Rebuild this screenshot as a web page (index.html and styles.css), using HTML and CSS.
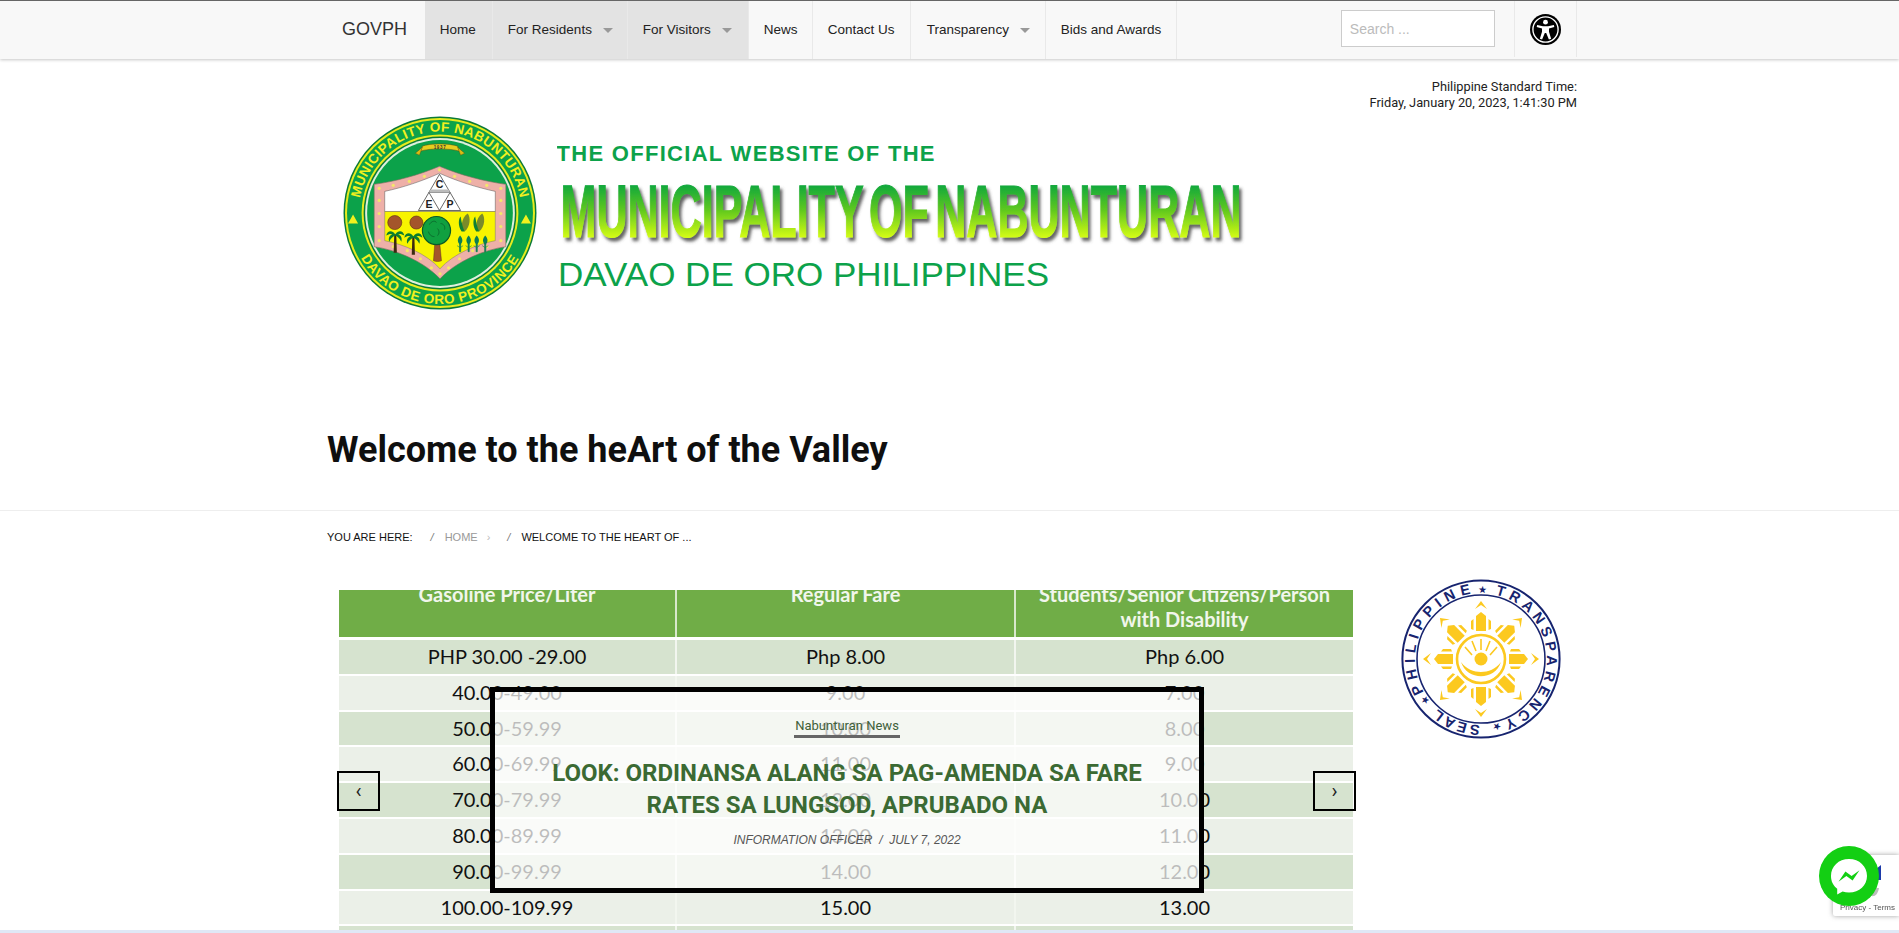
FILE: index.html
```html
<!DOCTYPE html>
<html lang="en">
<head>
    <meta charset="UTF-8">
    <meta name="viewport" content="width=device-width, initial-scale=1.0">
    <title>Welcome to the heArt of the Valley</title>
    <link rel="stylesheet" href="styles.css">
</head>
<body>
    <nav class="topbar">
        <div class="wrap topbar-inner">
            <a class="brand">GOVPH</a>
            <ul class="menu">
                <li class="menu-item active item-home">Home</li>
                <li class="menu-item active item-res">For Residents <span class="caret"></span></li>
                <li class="menu-item active item-vis">For Visitors <span class="caret"></span></li>
                <li class="menu-item item-news">News</li>
                <li class="menu-item item-contact">Contact Us</li>
                <li class="menu-item item-trans">Transparency <span class="caret"></span></li>
                <li class="menu-item item-bids">Bids and Awards</li>
            </ul>
            <input class="search" type="text" placeholder="Search ...">
            <div class="a11y">
                <svg width="31" height="31" viewBox="0 0 32 32">
                    <circle cx="16" cy="16" r="16" fill="#000"/>
                    <circle cx="16" cy="16" r="13" fill="none" stroke="#fff" stroke-width="1.4"/>
                    <circle cx="16" cy="8.4" r="2.5" fill="#fff"/>
                    <path d="M7.4 11.4 L13.4 12.6 H18.6 L24.6 11.4 L25.1 13.4 L19.6 15 V18.4 L21.8 25.6 L19.5 26.3 L16.7 19.6 H15.3 L12.5 26.3 L10.2 25.6 L12.4 18.4 V15 L6.9 13.4 Z" fill="#fff"/>
                </svg>
            </div>
        </div>
    </nav>

    <div class="wrap">
        <div class="pst">
            Philippine Standard Time:<br>
            Friday, January 20, 2023, 1:41:30 PM
        </div>

        <header class="masthead">
            <svg class="town-seal" width="194" height="194" viewBox="0 0 193 193">
                <defs>
                    <path id="sealTop" d="M15.5 96.5 A81 81 0 1 1 177.5 96.5"/>
                    <path id="sealBottom" d="M6 96.5 A90.5 90.5 0 0 0 187 96.5"/>
                    <g id="palm">
                        <path d="M-1 0 L-1.6 18 H1.6 L1 0 Z" fill="#3a2a10"/>
                        <path d="M0 0 C-3 -5 -8 -4 -9 1 C-6 -1 -4 -1 -3 0 C-6 1 -7 4 -6 7 C-4 3 -2 2 0 1 C2 2 4 3 6 7 C7 4 6 1 3 0 C4 -1 6 -1 9 1 C8 -4 3 -5 0 0 Z" fill="#0a7d2f"/>
                    </g>
                    <g id="corn">
                        <path d="M3 -9 C6 -6 6 4 0 9 C-4 6 -4 -4 3 -9 Z" fill="#7a8a2a"/>
                        <path d="M-3 9 C-7 3 -6 -4 -4 -6 C-3 0 -2 5 0 9 Z" fill="#0f7f35"/>
                    </g>
                    <g id="sprout">
                        <path d="M0 -6 C3 -3 3 1 0 3 C-3 1 -3 -3 0 -6 Z" fill="#0a7d55"/>
                        <path d="M-0.6 2 H0.6 V10 H-0.6 Z M0 6 L-3 4 M0 6 L3 4" fill="#0a7d55" stroke="#0a7d55" stroke-width=".6"/>
                    </g>
                </defs>
                <circle cx="96.5" cy="96.5" r="96" fill="#0b7a38"/>
                <circle cx="96.5" cy="96.5" r="94.5" fill="#e6ec1e"/>
                <circle cx="96.5" cy="96.5" r="92.5" fill="#0ca24a"/>
                <circle cx="96.5" cy="96.5" r="78" fill="#e6ec1e"/>
                <circle cx="96.5" cy="96.5" r="76" fill="#0b7a38"/>
                <circle cx="96.5" cy="96.5" r="74.5" fill="#dff0dd"/>
                <circle cx="96.5" cy="96.5" r="72.5" fill="#0ca24a"/>
                <text class="seal-text"><textPath href="#sealTop" startOffset="50%" text-anchor="middle" letter-spacing=".3">MUNICIPALITY OF NABUNTURAN</textPath></text>
                <text class="seal-text"><textPath href="#sealBottom" startOffset="50%" text-anchor="middle" letter-spacing=".6">DAVAO DE ORO PROVINCE</textPath></text>
                <path d="M5 107 L10 98 L15 107 Z M177 107 L182 98 L187 107 Z" fill="#f2f01e"/>
                <path d="M79 30 C86 27 106 27 114 30 L116 35 C106 32 86 32 77 35 Z" fill="#e6cf1e" stroke="#5a4a10" stroke-width=".5"/>
                <path d="M79 31 L76 39 L72 37 Z M114 31 L117 39 L121 37 Z" fill="#d8bc14" stroke="#5a4a10" stroke-width=".4"/>
                <text class="seal-year" x="96.5" y="33">1937</text>
                <!-- shield -->
                <path d="M96 50 C75 59 52 65 31 68 V130 C52 133 80 144 96.5 162 C113 144 141 133 162 130 V68 C141 65 117 59 96 50 Z" fill="#eeb0a8" stroke="#7c6a60" stroke-width=".6"/>
                <path d="M96 57 C78 65 60 71 41.5 75 V95 H151.5 V75 C133 71 114 65 96 57 Z" fill="#fff" stroke="#555" stroke-width=".5"/>
                <path d="M41.5 95 H151.5 V124 C132 128 110 137 96.5 152 C83 137 61 128 41.5 124 Z" fill="#f8f400" stroke="#777" stroke-width=".5"/>
                <g fill="#f4e76a">
                    <circle cx="96" cy="53.5" r="1.6"/><circle cx="81" cy="60" r="1.6"/><circle cx="111" cy="60" r="1.6"/><circle cx="66" cy="65" r="1.6"/><circle cx="126" cy="65" r="1.6"/><circle cx="50" cy="69" r="1.6"/><circle cx="143" cy="69" r="1.6"/><circle cx="36" cy="72" r="1.6"/><circle cx="157" cy="72" r="1.6"/>
                    <circle cx="36" cy="84" r="1.6"/><circle cx="157" cy="84" r="1.6"/><circle cx="36" cy="97" r="1.6"/><circle cx="157" cy="97" r="1.6"/><circle cx="36" cy="110" r="1.6"/><circle cx="157" cy="110" r="1.6"/><circle cx="36" cy="124" r="1.6"/><circle cx="157" cy="124" r="1.6"/>
                    <circle cx="50" cy="130" r="1.6"/><circle cx="143" cy="130" r="1.6"/><circle cx="64" cy="134" r="1.6"/><circle cx="129" cy="134" r="1.6"/><circle cx="77" cy="142" r="1.6"/><circle cx="116" cy="142" r="1.6"/><circle cx="88" cy="151" r="1.6"/><circle cx="105" cy="151" r="1.6"/><circle cx="96.5" cy="157" r="1.6"/>
                </g>
                <path d="M96 58 L75 94 H117 Z M85.5 76 H106.5 M85.5 76 L96 94 L106.5 76" fill="#fff" stroke="#444" stroke-width=".8"/>
                <path d="M85.5 76 H106.5 L105 73 H87 Z" fill="#bbb"/>
                <text class="seal-letter" x="96" y="72">C</text>
                <text class="seal-letter" x="85.5" y="91.5">E</text>
                <text class="seal-letter" x="106.5" y="91.5">P</text>
                <circle cx="51.5" cy="106" r="7" fill="#a4552b" stroke="#5a2f12" stroke-width=".6"/>
                <circle cx="73" cy="106" r="6.5" fill="#a4552b" stroke="#5a2f12" stroke-width=".6"/>
                <use href="#palm" x="52" y="118"/>
                <use href="#palm" x="70" y="120"/>
                <path d="M91.5 124 L90 144 C92 145 96 145 98 144 L96 124 Z" fill="#a4552b" stroke="#4a2a10" stroke-width=".4"/>
                <circle cx="93" cy="114" r="14" fill="#10a040" stroke="#0a5a28" stroke-width="1.2"/>
                <path d="M86 108 C88 104 92 104 93 106 M97 107 C100 107 102 110 101 113 M85 115 C86 119 89 120 91 120 M94 112 C96 114 96 117 94 119" fill="none" stroke="#0a5a28" stroke-width=".7"/>
                <use href="#corn" x="121" y="106"/>
                <use href="#corn" x="135.5" y="106"/>
                <use href="#sprout" x="116.5" y="125"/>
                <use href="#sprout" x="125" y="125"/>
                <use href="#sprout" x="133" y="125"/>
                <use href="#sprout" x="141.5" y="125"/>
            </svg>
            <svg class="title-art" width="700" height="180" viewBox="0 0 700 180">
                <defs>
                    <linearGradient id="artFill" gradientUnits="userSpaceOnUse" x1="0" y1="46" x2="0" y2="100">
                        <stop offset="0" stop-color="#0aa53f"/>
                        <stop offset=".5" stop-color="#5fc81f"/>
                        <stop offset="1" stop-color="#d2fb15"/>
                    </linearGradient>
                    <filter id="artShadow" x="-2%" y="-10%" width="104%" height="130%">
                        <feDropShadow dx="2.5" dy="3.5" stdDeviation="1.6" flood-color="#555" flood-opacity=".9"/>
                    </filter>
                </defs>
                <text class="art-line1" x="-0.5" y="24" textLength="378" lengthAdjust="spacing">THE OFFICIAL WEBSITE OF THE</text>
                <text class="art-line2" x="3.5" y="100" textLength="681" lengthAdjust="spacingAndGlyphs" fill="url(#artFill)" stroke="url(#artFill)" filter="url(#artShadow)">MUNICIPALITY OF NABUNTURAN</text>
                <text class="art-line3" x="1" y="149" textLength="491" lengthAdjust="spacingAndGlyphs">DAVAO DE ORO PHILIPPINES</text>
            </svg>
        </header>

        <h1 class="page-title">Welcome to the heArt of the Valley</h1>
    </div>

    <hr class="rule">

    <div class="wrap">
        <div class="crumbs">
            <span class="crumb-label">YOU ARE HERE:</span>
            <span class="crumb-sep">/</span>
            <span class="crumb-home">HOME</span>
            <span class="crumb-arrow">›</span>
            <span class="crumb-sep sep-two">/</span>
            <span class="crumb-last">WELCOME TO THE HEART OF ...</span>
        </div>

        <div class="main-row">
            <section class="slider">
                <div class="fare-head">
                    <div>Gasoline Price/Liter</div>
                    <div>Regular Fare</div>
                    <div>Students/Senior Citizens/Person with Disability</div>
                </div>
                <div class="fare-row"><div>PHP 30.00 -29.00</div><div>Php 8.00</div><div>Php 6.00</div></div>
                <div class="fare-row"><div>40.00-49.00</div><div>9.00</div><div>7.00</div></div>
                <div class="fare-row"><div>50.00-59.99</div><div>10.00</div><div>8.00</div></div>
                <div class="fare-row"><div>60.00-69.99</div><div>11.00</div><div>9.00</div></div>
                <div class="fare-row"><div>70.00-79.99</div><div>12.00</div><div>10.00</div></div>
                <div class="fare-row"><div>80.00-89.99</div><div>13.00</div><div>11.00</div></div>
                <div class="fare-row"><div>90.00-99.99</div><div>14.00</div><div>12.00</div></div>
                <div class="fare-row"><div>100.00-109.99</div><div>15.00</div><div>13.00</div></div>
                <div class="fare-row"><div></div><div></div><div></div></div>

                <div class="caption">
                    <a class="caption-cat">Nabunturan News</a>
                    <h2 class="caption-title">LOOK: ORDINANSA ALANG SA PAG-AMENDA SA FARE RATES SA LUNGSOD, APRUBADO NA</h2>
                    <div class="caption-meta">INFORMATION OFFICER &nbsp;/&nbsp; JULY 7, 2022</div>
                </div>
                <button class="slide-btn prev">‹</button>
                <button class="slide-btn next">›</button>
            </section>

            <aside class="side">
                <svg width="160" height="160" viewBox="0 0 160 160">
                    <defs>
                        <path id="ptsRing" d="M80 14 a66 66 0 1 1 -0.01 0"/>
                        <g id="ray">
                            <path d="M-5 -28 V-43 L0 -47 L5 -43 V-28 Z"/>
                            <path d="M-6 -50 L0 -58 L6 -50 L0 -54 Z"/>
                            <path d="M-10 -30 L-7.5 -29 V-40 L-10 -38 Z M10 -30 L7.5 -29 V-40 L10 -38 Z"/>
                        </g>
                    </defs>
                    <circle cx="80" cy="80" r="78.6" fill="#fff" stroke="#17246f" stroke-width="2"/>
                    <circle cx="80" cy="80" r="64" fill="#fff" stroke="#17246f" stroke-width="1.6"/>
                    <g transform="rotate(240 80 80)"><text class="pts-text"><textPath href="#ptsRing" textLength="128" lengthAdjust="spacing">PHILIPPINE</textPath></text></g>
                    <g transform="rotate(12.6 80 80)"><text class="pts-text"><textPath href="#ptsRing" textLength="169" lengthAdjust="spacing">TRANSPARENCY</textPath></text></g>
                    <g transform="rotate(181 80 80)"><text class="pts-text"><textPath href="#ptsRing" textLength="46" lengthAdjust="spacing">SEAL</textPath></text></g>
                    <g transform="rotate(-2.5 80 80)"><text class="pts-star"><textPath href="#ptsRing">★</textPath></text></g>
                    <g transform="rotate(163 80 80)"><text class="pts-star"><textPath href="#ptsRing">★</textPath></text></g>
                    <g transform="rotate(230 80 80)"><text class="pts-star"><textPath href="#ptsRing">★</textPath></text></g>
                    <g fill="#fcc91f">
                        <use href="#ray" transform="translate(80 80)"/>
                        <use href="#ray" transform="translate(80 80) rotate(45)"/>
                        <use href="#ray" transform="translate(80 80) rotate(90)"/>
                        <use href="#ray" transform="translate(80 80) rotate(135)"/>
                        <use href="#ray" transform="translate(80 80) rotate(180)"/>
                        <use href="#ray" transform="translate(80 80) rotate(225)"/>
                        <use href="#ray" transform="translate(80 80) rotate(270)"/>
                        <use href="#ray" transform="translate(80 80) rotate(315)"/>
                    </g>
                    <circle cx="80" cy="80" r="24" fill="#fff" stroke="#fcc91f" stroke-width="2.6"/>
                    <circle cx="80" cy="80" r="6.5" fill="#fcc91f"/>
                    <path d="M80 60 V71 M71 62 L75 72 M89 62 L85 72 M64 68 L71 76 M96 68 L89 76" stroke="#fcc91f" stroke-width="1.6"/>
                    <path d="M60 83 C66 102 94 102 100 83 C95 90 87 93 80 93 C73 93 65 90 60 83 Z" fill="#fcc91f"/>
                </svg>
            </aside>
        </div>
    </div>

    <div class="recaptcha">
        <svg class="recaptcha-logo" width="30" height="44" viewBox="0 0 30 44">
            <path d="M6 2 L11 6 L16 2 V17 H6 Z" fill="#1c3aa9"/>
            <path d="M0 25 H14 C12 36 4 36 0 25 Z" fill="#bdbdbd"/>
        </svg>
        <div class="recaptcha-links">Privacy - Terms</div>
    </div>
    <div class="messenger">
        <svg width="60" height="60" viewBox="0 0 60 60">
            <circle cx="30" cy="30" r="30" fill="#13cf13"/>
            <path d="M30 13 C19.5 13 12 20.4 12 30 C12 35.4 14.3 39.8 18.2 42.8 V48.5 L23.6 45.6 C25.6 46.2 27.7 46.6 30 46.6 C40.5 46.6 48 39.2 48 30 C48 20.4 40.5 13 30 13 Z" fill="#fff"/>
            <path d="M19.5 35.8 L26.4 25.4 L32.6 30 L40.5 24.2 L33.6 34.6 L27.4 30 Z" fill="#13cf13"/>
        </svg>
    </div>
    <div class="bottom-strip"></div>
</body>
</html>
```

FILE: styles.css
```css
html, body {
    margin: 0;
    padding: 0;
    height: 100vh;
    overflow: hidden;
}

body {
    font-family: "Liberation Sans", Arial, sans-serif;
    color: #111;
    background: #fff;
}

.wrap {
    width: 1250px;
    margin-left: 327px;
}

/* top bar */
.topbar {
    height: 58px;
    background: #f8f8f8;
    border-top: 1px solid #666;
    box-shadow: 0 1px 3px rgba(0, 0, 0, 0.22);
}

.topbar-inner {
    display: flex;
    align-items: stretch;
    height: 58px;
}

.brand {
    width: 99px;
    box-sizing: border-box;
    padding-left: 15px;
    font-size: 18px;
    line-height: 57px;
    color: #333;
}

.menu {
    display: flex;
    margin: 0;
    padding: 0;
    list-style: none;
}

.menu-item {
    box-sizing: border-box;
    padding-left: 15px;
    font-size: 13.5px;
    line-height: 57px;
    color: #222;
    border-right: 1px solid #e9e9e9;
    white-space: nowrap;
}

.menu-item.active {
    background: #e3e3e3;
}

.item-home { width: 68px; }
.item-res { width: 135px; }
.item-vis { width: 121px; }
.item-news { width: 64px; }
.item-contact { width: 98px; }
.item-trans { width: 135px; padding-left: 16px; }
.item-bids { width: 131px; }

.caret {
    display: inline-block;
    margin-left: 7px;
    vertical-align: 1px;
    border-top: 5px solid #999;
    border-left: 5px solid transparent;
    border-right: 5px solid transparent;
}

.search {
    box-sizing: border-box;
    width: 154px;
    height: 37px;
    margin: 9px 0 0 164px;
    padding: 0 8px;
    font-family: inherit;
    font-size: 14px;
    background: #fff;
    border: 1px solid #ccc;
}

.search::placeholder {
    color: #bbb;
}

.a11y {
    display: flex;
    align-items: center;
    justify-content: center;
    width: 62px;
    height: 56px;
    margin-left: 19px;
    border-left: 1px solid #e9e9e9;
    border-right: 1px solid #e9e9e9;
}

/* header */
.pst {
    margin-top: 20px;
    font-family: Roboto, sans-serif;
    font-size: 12.8px;
    line-height: 16px;
    text-align: right;
    color: #222;
}

.masthead {
    display: flex;
    align-items: flex-start;
    height: 200px;
    margin-top: 4px;
    padding: 0 0 0 16px;
}

.town-seal {
    flex: none;
    margin-top: 1px;
}

.title-art {
    flex: none;
    margin-left: 20px;
    margin-top: 22px;
    font-family: "Liberation Sans", Arial, sans-serif;
}

.art-line1 {
    font-size: 22px;
    font-weight: 700;
    fill: #0ca24a;
}

.art-line2 {
    font-size: 75px;
    font-weight: 700;
    stroke-width: 1.2px;
    word-spacing: -10px;
}

.art-line3 {
    font-size: 33px;
    fill: #0ca24a;
}

.page-title {
    margin: 114px 0 0;
    font-family: Roboto, sans-serif;
    font-size: 36px;
    font-weight: 700;
    line-height: 42px;
    color: #0f0f0f;
}

.rule {
    height: 1px;
    margin: 39px 0 0;
    background: #eee;
    border: 0;
}

/* breadcrumb */
.crumbs {
    display: flex;
    height: 79px;
    padding-top: 20px;
    box-sizing: border-box;
    font-size: 11px;
    line-height: 13px;
    color: #111;
}

.crumb-sep {
    margin-left: 18px;
    color: #777;
    font-style: italic;
}

.crumb-home {
    margin-left: 11px;
    color: #999;
}

.crumb-arrow {
    margin-left: 9px;
    color: #bbb;
}

.crumb-sep.sep-two {
    margin-left: 17px;
}

.crumb-last {
    margin-left: 11px;
}

/* slider */
.main-row {
    display: flex;
    align-items: flex-start;
}

.slider {
    position: relative;
    flex: none;
    width: 1014px;
    height: 343px;
    margin-left: 12px;
    font-family: Lato, sans-serif;
    font-size: 20px;
    color: #111;
}

.fare-head,
.fare-row {
    display: grid;
    grid-template-columns: 338px 339px 337px;
    text-align: center;
}

.fare-head {
    height: 47px;
    overflow: hidden;
    background: #70ad47;
    color: #f1f6ec;
    font-weight: 700;
    line-height: 25px;
}

.fare-head > div {
    margin-top: -8px;
    padding: 0 8px 8px;
    border-right: 2px solid #d8e8cc;
}

.fare-head > div:last-child {
    border-right: 0;
}

.fare-row {
    height: 33.8px;
    margin-top: 2px;
    line-height: 33px;
    background: #ebf0e8;
}

.fare-head + .fare-row {
    margin-top: 3px;
}

.fare-row:nth-child(even) {
    background: #d6e3cf;
}

.fare-row > div {
    border-right: 2px solid #f2f6ef;
}

.fare-row > div:last-child {
    border-right: 0;
}

.caption {
    position: absolute;
    left: 151px;
    top: 97px;
    box-sizing: border-box;
    width: 714px;
    height: 206px;
    padding: 19px 50px 0;
    font-family: Roboto, sans-serif;
    text-align: center;
    background: rgba(255, 255, 255, 0.72);
    border: 5px solid #000;
}

.caption-cat {
    display: inline-block;
    padding: 0 1px 1px;
    font-size: 13px;
    line-height: 16px;
    color: #3f5f3a;
    border-bottom: 3px solid #666;
}

.caption-title {
    margin: 19px 0 0;
    font-size: 24px;
    font-weight: 700;
    line-height: 32px;
    color: #3b6a33;
}

.caption-meta {
    margin-top: 12px;
    font-family: "Liberation Sans", Arial, sans-serif;
    font-size: 12px;
    font-style: italic;
    color: #555;
}

.slide-btn {
    position: absolute;
    top: 181px;
    box-sizing: border-box;
    width: 43px;
    height: 40px;
    padding: 0;
    font-family: Roboto, sans-serif;
    font-size: 20px;
    line-height: 32px;
    color: #222;
    background: transparent;
    border: 2px solid #000;
}

.slide-btn.prev { left: -2px; }
.slide-btn.next { right: -3px; }

.side {
    flex: none;
    margin: -11px 0 0 48px;
}

.side svg {
    display: block;
}

.pts-text {
    font-family: "Liberation Sans", Arial, sans-serif;
    font-size: 14.5px;
    font-weight: 700;
    fill: #17246f;
}

.pts-star {
    font-family: "DejaVu Sans", sans-serif;
    font-size: 10px;
    fill: #17246f;
}

.seal-text {
    font-family: "Liberation Sans", Arial, sans-serif;
    font-size: 13.5px;
    font-weight: 700;
    fill: #f2f01e;
}

.seal-year {
    font-family: "Liberation Sans", Arial, sans-serif;
    font-size: 4.4px;
    font-weight: 700;
    letter-spacing: 0.7px;
    text-anchor: middle;
    fill: #333;
}

.seal-letter {
    font-family: "Liberation Sans", Arial, sans-serif;
    font-size: 10.5px;
    font-weight: 700;
    text-anchor: middle;
    fill: #222;
}

/* floating */
.recaptcha {
    position: fixed;
    left: 1833px;
    top: 855px;
    width: 66px;
    height: 61px;
    background: #fff;
    border-radius: 2px 0 0 2px;
    box-shadow: 0 0 5px rgba(100, 100, 100, 0.6);
}

.recaptcha-logo {
    position: absolute;
    left: 32px;
    top: 8px;
}

.recaptcha-links {
    position: absolute;
    left: 7px;
    top: 47px;
    font-size: 8px;
    line-height: 12px;
    color: #555;
    white-space: nowrap;
}

.messenger {
    position: fixed;
    left: 1819px;
    top: 846px;
    width: 60px;
    height: 60px;
}

.messenger svg {
    display: block;
}

.bottom-strip {
    position: fixed;
    left: 0;
    right: 0;
    bottom: 0;
    height: 3px;
    background: #e0e8f6;
}
```
